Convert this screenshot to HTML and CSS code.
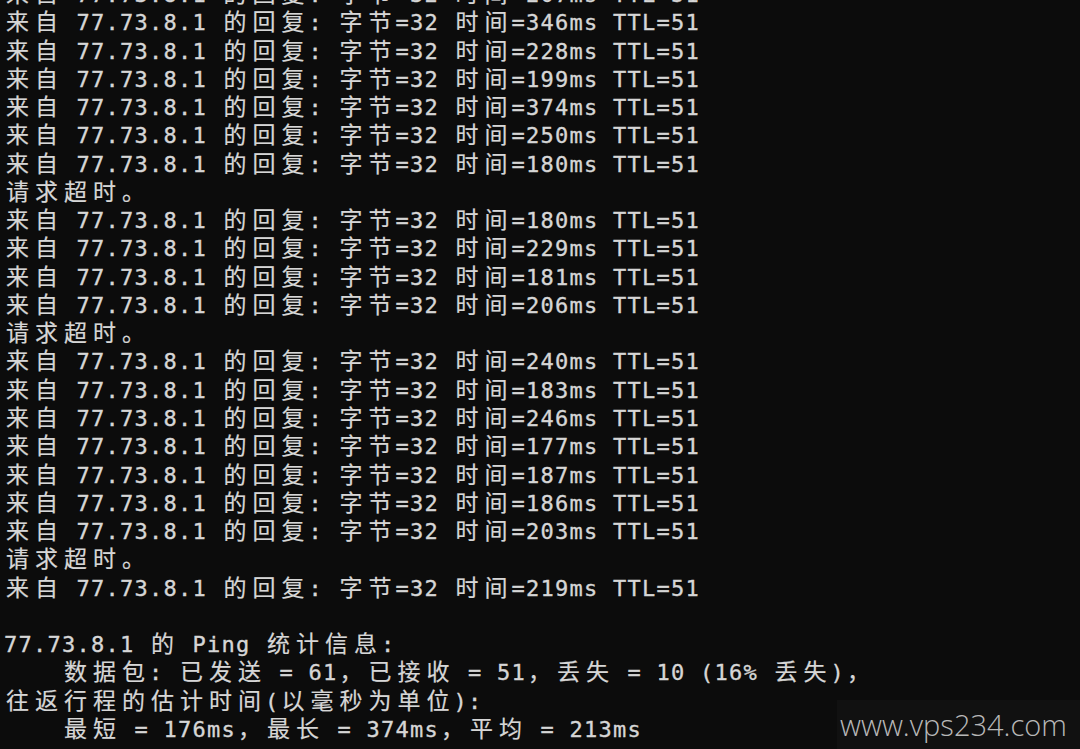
FILE: index.html
```html
<!DOCTYPE html>
<html lang="zh-CN">
<head>
<meta charset="utf-8">
<title>ping</title>
<link rel="stylesheet" href="styles.css">
</head>
<body>
<div class="term">
<div class="ln"><span class="c">来自</span> 77.73.8.1 <span class="c">的回复</span>: <span class="c">字节</span>=32 <span class="c">时间</span>=207ms TTL=51</div>
<div class="ln"><span class="c">来自</span> 77.73.8.1 <span class="c">的回复</span>: <span class="c">字节</span>=32 <span class="c">时间</span>=346ms TTL=51</div>
<div class="ln"><span class="c">来自</span> 77.73.8.1 <span class="c">的回复</span>: <span class="c">字节</span>=32 <span class="c">时间</span>=228ms TTL=51</div>
<div class="ln"><span class="c">来自</span> 77.73.8.1 <span class="c">的回复</span>: <span class="c">字节</span>=32 <span class="c">时间</span>=199ms TTL=51</div>
<div class="ln"><span class="c">来自</span> 77.73.8.1 <span class="c">的回复</span>: <span class="c">字节</span>=32 <span class="c">时间</span>=374ms TTL=51</div>
<div class="ln"><span class="c">来自</span> 77.73.8.1 <span class="c">的回复</span>: <span class="c">字节</span>=32 <span class="c">时间</span>=250ms TTL=51</div>
<div class="ln"><span class="c">来自</span> 77.73.8.1 <span class="c">的回复</span>: <span class="c">字节</span>=32 <span class="c">时间</span>=180ms TTL=51</div>
<div class="ln"><span class="c">请求超时。</span></div>
<div class="ln"><span class="c">来自</span> 77.73.8.1 <span class="c">的回复</span>: <span class="c">字节</span>=32 <span class="c">时间</span>=180ms TTL=51</div>
<div class="ln"><span class="c">来自</span> 77.73.8.1 <span class="c">的回复</span>: <span class="c">字节</span>=32 <span class="c">时间</span>=229ms TTL=51</div>
<div class="ln"><span class="c">来自</span> 77.73.8.1 <span class="c">的回复</span>: <span class="c">字节</span>=32 <span class="c">时间</span>=181ms TTL=51</div>
<div class="ln"><span class="c">来自</span> 77.73.8.1 <span class="c">的回复</span>: <span class="c">字节</span>=32 <span class="c">时间</span>=206ms TTL=51</div>
<div class="ln"><span class="c">请求超时。</span></div>
<div class="ln"><span class="c">来自</span> 77.73.8.1 <span class="c">的回复</span>: <span class="c">字节</span>=32 <span class="c">时间</span>=240ms TTL=51</div>
<div class="ln"><span class="c">来自</span> 77.73.8.1 <span class="c">的回复</span>: <span class="c">字节</span>=32 <span class="c">时间</span>=183ms TTL=51</div>
<div class="ln"><span class="c">来自</span> 77.73.8.1 <span class="c">的回复</span>: <span class="c">字节</span>=32 <span class="c">时间</span>=246ms TTL=51</div>
<div class="ln"><span class="c">来自</span> 77.73.8.1 <span class="c">的回复</span>: <span class="c">字节</span>=32 <span class="c">时间</span>=177ms TTL=51</div>
<div class="ln"><span class="c">来自</span> 77.73.8.1 <span class="c">的回复</span>: <span class="c">字节</span>=32 <span class="c">时间</span>=187ms TTL=51</div>
<div class="ln"><span class="c">来自</span> 77.73.8.1 <span class="c">的回复</span>: <span class="c">字节</span>=32 <span class="c">时间</span>=186ms TTL=51</div>
<div class="ln"><span class="c">来自</span> 77.73.8.1 <span class="c">的回复</span>: <span class="c">字节</span>=32 <span class="c">时间</span>=203ms TTL=51</div>
<div class="ln"><span class="c">请求超时。</span></div>
<div class="ln"><span class="c">来自</span> 77.73.8.1 <span class="c">的回复</span>: <span class="c">字节</span>=32 <span class="c">时间</span>=219ms TTL=51</div>
<div class="ln"></div>
<div class="ln">77.73.8.1 <span class="c">的</span> Ping <span class="c">统计信息</span>:</div>
<div class="ln">    <span class="c">数据包</span>: <span class="c">已发送</span> = 61<span class="c">，已接收</span> = 51<span class="c">，丢失</span> = 10 (16% <span class="c">丢失</span>)<span class="c">，</span></div>
<div class="ln"><span class="c">往返行程的估计时间</span>(<span class="c">以毫秒为单位</span>):</div>
<div class="ln">    <span class="c">最短</span> = 176ms<span class="c">，最长</span> = 374ms<span class="c">，平均</span> = 213ms</div>
</div>
<div class="mark">www.vps234.com</div>
</body>
</html>
```
FILE: styles.css
```css
html, body {
  margin: 0;
  padding: 0;
  background: #0c0c0c;
  height: 100%;
  overflow: hidden;
}
body {
  position: relative;
}
.term {
  margin-top: -19px;
  padding-left: 4px;
  color: #d6d6d6;
  font-family: "DejaVu Sans Mono", monospace;
  font-size: 22px;
  letter-spacing: 1.255px;
  -webkit-text-stroke: 0.35px #d6d6d6;
}
.ln {
  height: 28.28px;
  line-height: 28.28px;
  white-space: pre;
}
.c {
  font-family: "Noto Sans CJK SC", sans-serif;
  font-size: 23px;
  letter-spacing: 6px;
  padding-left: 2px;
  margin-right: -2px;
  line-height: 0;
  -webkit-text-stroke: 0.2px #d6d6d6;
}
.mark {
  position: absolute;
  right: 0;
  bottom: 0;
  width: 240px;
  height: 49px;
  padding-left: 3px;
  background: rgba(255, 255, 255, 0.025);
  color: #b8b8b8;
  font-family: "Open Sans", sans-serif;
  font-weight: 300;
  font-size: 29px;
  line-height: 49px;
  letter-spacing: 0;
}
```
